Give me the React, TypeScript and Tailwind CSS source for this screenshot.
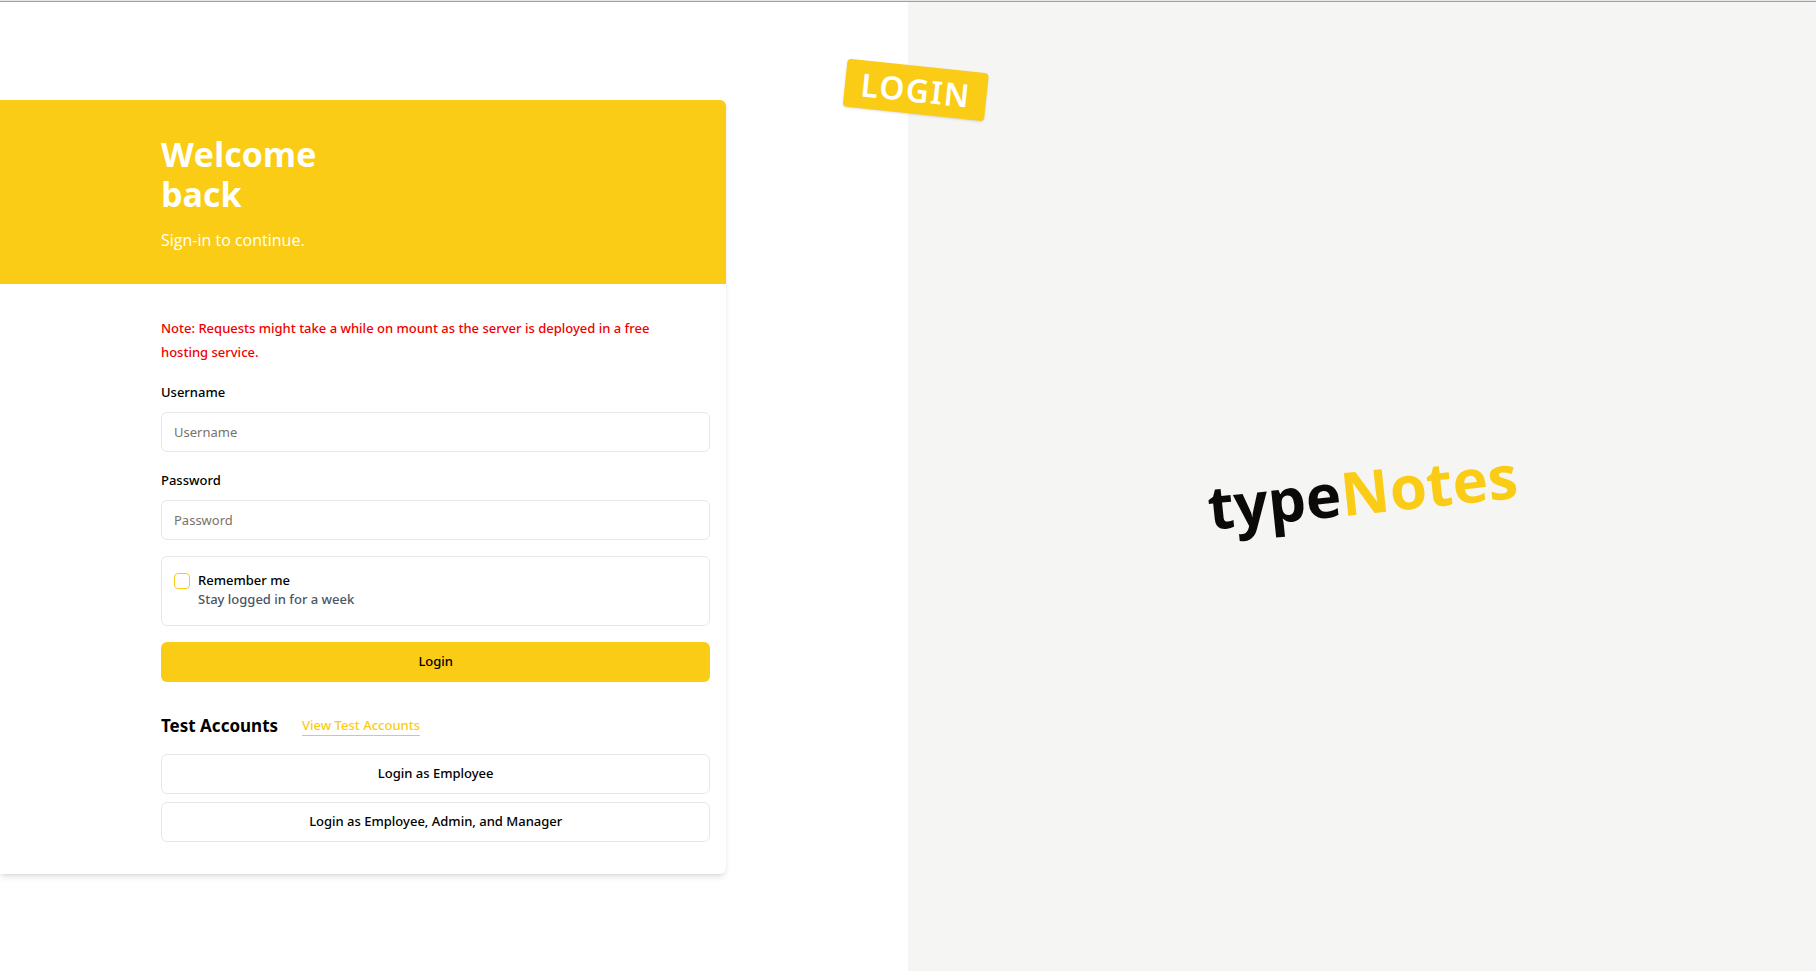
import type { ReactNode } from "react";

function Field({ id, label, type }: { id: string; label: string; type: string }) {
  return (
    <div className="flex flex-col gap-2">
      <label htmlFor={id} className="text-[13px] leading-6 font-medium">
        {label}
      </label>
      <input
        id={id}
        type={type}
        placeholder={label}
        className="h-10 w-full rounded-md border border-gray-200 bg-white px-3 text-[13px] placeholder:text-stone-500"
      />
    </div>
  );
}

function OutlineButton({ children }: { children: ReactNode }) {
  return (
    <button type="button" className="h-10 w-full rounded-md border border-gray-200 bg-white text-[13px] font-medium">
      {children}
    </button>
  );
}

export default function App() {
  return (
    <div className="relative flex min-h-screen flex-col border-t border-gray-200 bg-white font-['Noto_Sans','Open_Sans',sans-serif] text-black">
      <div className="grid flex-1 grid-cols-2 border-t border-gray-400">
        <main className="flex flex-col justify-center">
          <section className="w-4/5 rounded-r-md bg-white shadow-md">
            <header className="flex flex-col gap-[14px] rounded-tr-md bg-[#facc15] pt-[34px] pr-4 pb-8 pl-[161px] font-['Open_Sans','Noto_Sans',sans-serif] text-white">
              <h1 className="text-[34px] leading-10 font-bold">
                Welcome
                <br />
                back
              </h1>
              <p className="text-base">Sign-in to continue.</p>
            </header>
            <div className="flex flex-col gap-8 py-8 pr-4 pl-[161px]">
              <form className="flex flex-col gap-4">
                <p className="text-[13px] leading-6 font-medium text-[#f00000]">
                  Note: Requests might take a while on mount as the server is deployed in a free
                  <br />
                  hosting service.
                </p>
                <Field id="username" label="Username" type="text" />
                <Field id="password" label="Password" type="password" />
                <div className="flex items-start gap-2 rounded-md border border-gray-200 px-3 pt-[14px] pb-4">
                  <input
                    id="remember"
                    type="checkbox"
                    className="mt-0.5 size-4 appearance-none rounded-sm border border-[#facc15] checked:bg-[#facc15]"
                  />
                  <label htmlFor="remember" className="flex flex-col text-[13px] leading-[19px] font-medium">
                    Remember me
                    <span className="text-gray-600">Stay logged in for a week</span>
                  </label>
                </div>
                <button type="submit" className="h-10 w-full rounded-md bg-[#facc15] text-[13px] font-medium">
                  Login
                </button>
              </form>
              <div className="flex flex-col gap-4">
                <div className="flex items-center gap-6">
                  <h2 className="text-[17px] leading-6 font-bold">Test Accounts</h2>
                  <a href="#accounts" className="border-b border-[#facc15] text-[13px] leading-5 font-medium text-[#facc15]">
                    View Test Accounts
                  </a>
                </div>
                <div className="flex flex-col gap-2">
                  <OutlineButton>Login as Employee</OutlineButton>
                  <OutlineButton>Login as Employee, Admin, and Manager</OutlineButton>
                </div>
              </div>
            </div>
          </section>
        </main>
        <aside className="flex items-center justify-center bg-stone-100 pt-2">
          <p className="-rotate-6 font-['Open_Sans','Noto_Sans',sans-serif] text-6xl font-bold text-stone-950">
            type<span className="text-[#facc15]">Notes</span>
          </p>
        </aside>
      </div>
      <div className="absolute top-[65px] left-1/2 ml-2 -translate-x-1/2 rotate-6 rounded bg-[#facc15] px-4 py-1 text-[32px] leading-10 font-semibold tracking-wider text-white shadow-sm">
        LOGIN
      </div>
    </div>
  );
}
